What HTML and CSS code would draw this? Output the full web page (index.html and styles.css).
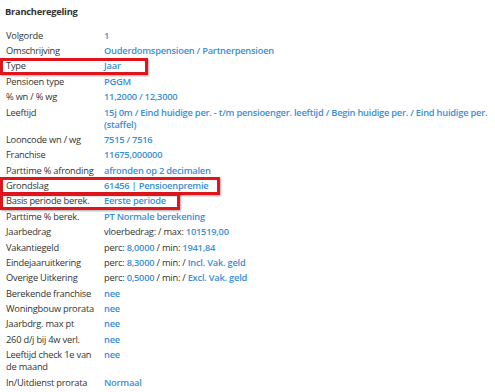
FILE: index.html
```html
<!DOCTYPE html>
<html lang="nl">
<head>
    <meta charset="UTF-8">
    <title>Brancheregeling</title>
    <link rel="stylesheet" href="styles.css">
</head>
<body>

    <h4>Brancheregeling</h4>

    <table class="details">
        <tr><td>Volgorde</td><td class="val">1</td></tr>
        <tr><td>Omschrijving</td><td class="val">Ouderdomspensioen / Partnerpensioen</td></tr>
        <tr class="marked mark-type"><td>Type</td><td class="val">Jaar</td></tr>
        <tr><td>Pensioen type</td><td class="val">PGGM</td></tr>
        <tr><td>% wn / % wg</td><td class="val">11,2000 / 12,3000</td></tr>
        <tr><td>Leeftijd</td><td class="val">15j 0m / Eind huidige per. - t/m pensioenger. leeftijd / Begin huidige per. / Eind huidige per. (staffel)</td></tr>
        <tr><td>Looncode wn / wg</td><td class="val">7515 / 7516</td></tr>
        <tr><td>Franchise</td><td class="val">11675,000000</td></tr>
        <tr><td>Parttime % afronding</td><td class="val">afronden op 2 decimalen</td></tr>
        <tr class="marked mark-grondslag"><td>Grondslag</td><td class="val">61456 | Pensioenpremie</td></tr>
        <tr class="marked mark-basis"><td>Basis periode berek.</td><td class="val">Eerste periode</td></tr>
        <tr><td>Parttime % berek.</td><td class="val">PT Normale berekening</td></tr>
        <tr><td>Jaarbedrag</td><td>vloerbedrag: / max: <span class="val">101519,00</span></td></tr>
        <tr><td>Vakantiegeld</td><td>perc: <span class="val">8,0000</span> / min: <span class="val">1941,84</span></td></tr>
        <tr><td>Eindejaaruitkering</td><td>perc: <span class="val">8,3000</span> / min: / <span class="val">Incl. Vak. geld</span></td></tr>
        <tr><td>Overige Uitkering</td><td>perc: <span class="val">0,5000</span> / min: / <span class="val">Excl. Vak. geld</span></td></tr>
        <tr><td>Berekende franchise</td><td class="val">nee</td></tr>
        <tr><td>Woningbouw prorata</td><td class="val">nee</td></tr>
        <tr><td>Jaarbdrg. max pt</td><td class="val">nee</td></tr>
        <tr><td>260 d/j bij 4w verl.</td><td class="val">nee</td></tr>
        <tr><td>Leeftijd check 1e van de maand</td><td class="val">nee</td></tr>
        <tr><td>In/Uitdienst prorata</td><td class="val">Normaal</td></tr>
    </table>

</body>
</html>
```
FILE: styles.css
```css
body {
    font-family: 'Open Sans', 'Liberation Sans', sans-serif;
    font-size: 9.3px;
    letter-spacing: -0.23px;
    color: #333;
    margin: 0;
    padding: 5px 4px;
    background: #fff;
}

h4 {
    font-size: 9.3px;
    font-weight: bold;
    margin: 0 0 10px 1px;
}

.details {
    border-collapse: collapse;
    width: 488px;
}

.details td {
    padding: 1.7px 2px;
    line-height: 12px;
    vertical-align: top;
}

.details td:first-child {
    width: 94px;
}

.val {
    color: #3a8ed8;
    font-weight: 600;
}

/* red highlight boxes over some rows */
.marked td:first-child {
    position: relative;
}

.marked td:first-child::after {
    content: '';
    position: absolute;
    left: -4px;
    top: -1px;
    bottom: -1px;
    border: 3px solid #e0141b;
    box-shadow: 1px 1px 2px rgba(0, 0, 0, 0.35);
}

.mark-type td:first-child::after {
    width: 142px;
}

.mark-grondslag td:first-child::after {
    width: 214px;
}

.mark-basis td:first-child::after {
    width: 174px;
}
```
